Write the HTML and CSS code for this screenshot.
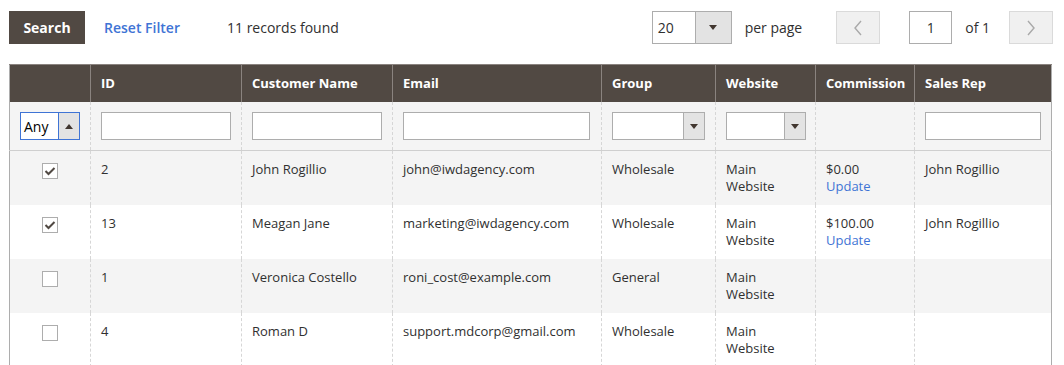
FILE: index.html
```html
<!DOCTYPE html>
<html lang="en">
<head>
    <meta charset="UTF-8">
    <title>Sales Reps Grid</title>
    <link rel="stylesheet" href="styles.css">
</head>
<body>
    <div class="grid-wrap">
        <div class="toolbar">
            <div class="toolbar-left">
                <button class="btn-search">Search</button>
                <a class="reset-link" href="#">Reset Filter</a>
                <span class="records">11 records found</span>
            </div>
            <div class="pager">
                <div class="select-box per-page">
                    <span class="select-value">20</span>
                    <span class="select-arrow"><span class="tri-down"></span></span>
                </div>
                <span class="pager-label">per page</span>
                <button class="pager-btn btn-prev">
                    <svg width="10" height="16" viewBox="0 0 10 16"><path d="M8 1 L2 8 L8 15" fill="none" stroke="#a9a9a9" stroke-width="1.4"/></svg>
                </button>
                <div class="page-input">1</div>
                <span class="pager-label">of 1</span>
                <button class="pager-btn btn-next">
                    <svg width="10" height="16" viewBox="0 0 10 16"><path d="M2 1 L8 8 L2 15" fill="none" stroke="#a9a9a9" stroke-width="1.4"/></svg>
                </button>
            </div>
        </div>

        <table class="data-grid">
            <colgroup>
                <col style="width:81px">
                <col style="width:151px">
                <col style="width:151px">
                <col style="width:209px">
                <col style="width:114px">
                <col style="width:100px">
                <col style="width:99px">
                <col style="width:137px">
            </colgroup>
            <thead>
                <tr class="head-row">
                    <th></th>
                    <th>ID</th>
                    <th>Customer Name</th>
                    <th>Email</th>
                    <th>Group</th>
                    <th>Website</th>
                    <th>Commission</th>
                    <th>Sales Rep</th>
                </tr>
                <tr class="filter-row">
                    <td class="center">
                        <div class="select-box any-select">
                            <span class="select-value">Any</span>
                            <span class="select-arrow"><span class="tri-up"></span></span>
                        </div>
                    </td>
                    <td><div class="text-input w130"></div></td>
                    <td><div class="text-input w130"></div></td>
                    <td><div class="text-input w187"></div></td>
                    <td>
                        <div class="select-box filter-select w93">
                            <span class="select-value"></span>
                            <span class="select-arrow"><span class="tri-down"></span></span>
                        </div>
                    </td>
                    <td>
                        <div class="select-box filter-select w80">
                            <span class="select-value"></span>
                            <span class="select-arrow"><span class="tri-down"></span></span>
                        </div>
                    </td>
                    <td></td>
                    <td><div class="text-input w116"></div></td>
                </tr>
            </thead>
            <tbody>
                <tr class="alt">
                    <td class="center"><span class="checkbox checked"><svg width="12" height="10" viewBox="0 0 12 10"><path d="M1.5 5 L4.5 8 L10.5 2" fill="none" stroke="#514943" stroke-width="2"/></svg></span></td>
                    <td>2</td>
                    <td>John Rogillio</td>
                    <td>john@iwdagency.com</td>
                    <td>Wholesale</td>
                    <td>Main<br>Website</td>
                    <td>$0.00<br><a class="link" href="#">Update</a></td>
                    <td>John Rogillio</td>
                </tr>
                <tr>
                    <td class="center"><span class="checkbox checked"><svg width="12" height="10" viewBox="0 0 12 10"><path d="M1.5 5 L4.5 8 L10.5 2" fill="none" stroke="#514943" stroke-width="2"/></svg></span></td>
                    <td>13</td>
                    <td>Meagan Jane</td>
                    <td>marketing@iwdagency.com</td>
                    <td>Wholesale</td>
                    <td>Main<br>Website</td>
                    <td>$100.00<br><a class="link" href="#">Update</a></td>
                    <td>John Rogillio</td>
                </tr>
                <tr class="alt">
                    <td class="center"><span class="checkbox"></span></td>
                    <td>1</td>
                    <td>Veronica Costello</td>
                    <td>roni_cost@example.com</td>
                    <td>General</td>
                    <td>Main<br>Website</td>
                    <td></td>
                    <td></td>
                </tr>
                <tr>
                    <td class="center"><span class="checkbox"></span></td>
                    <td>4</td>
                    <td>Roman D</td>
                    <td>support.mdcorp@gmail.com</td>
                    <td>Wholesale</td>
                    <td>Main<br>Website</td>
                    <td></td>
                    <td></td>
                </tr>
            </tbody>
        </table>
    </div>
</body>
</html>
```

FILE: styles.css
```css
body {
    margin: 0;
    font-family: 'Open Sans', Arial, sans-serif;
    color: #303030;
    background-color: #ffffff;
}

.grid-wrap {
    padding: 11px 11px 0 9px;
}

/* Toolbar */
.toolbar {
    display: flex;
    justify-content: space-between;
    align-items: center;
    height: 33px;
    margin-bottom: 20px;
}

.toolbar-left {
    display: flex;
    align-items: center;
}

.btn-search {
    width: 76px;
    height: 33px;
    border: none;
    background-color: #514943;
    color: #ffffff;
    font-family: 'Open Sans', Arial, sans-serif;
    font-size: 14px;
    font-weight: bold;
    padding: 0;
}

.reset-link {
    margin-left: 19px;
    color: #3f74d5;
    font-size: 14px;
    font-weight: 600;
    text-decoration: none;
}

.records {
    margin-left: 47px;
    font-size: 14px;
}

.pager {
    display: flex;
    align-items: center;
}

.pager-label {
    font-size: 14px;
}

.pager-btn {
    display: flex;
    align-items: center;
    justify-content: center;
    width: 44px;
    height: 33px;
    padding: 0;
    background-color: #f0f0f0;
    border: 1px solid #dadada;
}

.btn-prev {
    margin-left: 34px;
}

.btn-next {
    margin-left: 19px;
}

.per-page {
    width: 80px;
    height: 33px;
    margin-right: 13px;
}

.per-page .select-arrow {
    width: 35px;
}

.per-page .select-value {
    padding-left: 5px;
    font-size: 14px;
}

.page-input {
    width: 43px;
    height: 33px;
    box-sizing: border-box;
    margin-left: 29px;
    margin-right: 13px;
    border: 1px solid #adadad;
    font-size: 14px;
    text-align: center;
    line-height: 31px;
}

/* Select boxes */
.select-box {
    display: flex;
    box-sizing: border-box;
    border: 1px solid #adadad;
    background-color: #ffffff;
}

.select-value {
    flex: 1;
    display: flex;
    align-items: center;
    font-size: 13px;
}

.select-arrow {
    width: 20px;
    display: flex;
    align-items: center;
    justify-content: center;
    background-color: #e3e3e3;
    border-left: 1px solid #adadad;
}

.tri-down {
    width: 0;
    height: 0;
    border-left: 4px solid transparent;
    border-right: 4px solid transparent;
    border-top: 5px solid #41362f;
}

.tri-up {
    width: 0;
    height: 0;
    border-left: 4px solid transparent;
    border-right: 4px solid transparent;
    border-bottom: 5px solid #41362f;
}

.any-select {
    width: 60px;
    height: 28px;
    margin: 0 auto;
    border-color: #3f74d5;
}

.any-select .select-arrow {
    border-left-color: #3f74d5;
}

.any-select .select-value {
    padding-left: 3px;
    font-size: 14px;
    color: #000000;
}

.filter-select {
    height: 28px;
}

/* Table */
.data-grid {
    width: 1042px;
    table-layout: fixed;
    border-collapse: collapse;
    border: 1px solid #adadad;
    font-size: 13px;
}

.data-grid th {
    height: 36px;
    padding: 0 10px 1px;
    background-color: #514943;
    color: #ffffff;
    font-weight: bold;
    text-align: left;
    border-left: 1px solid #8a837f;
    border-top: 1px solid #8a837f;
}

.data-grid th:first-child {
    border-left: 1px solid #adadad;
}

.filter-row td {
    height: 48px;
    padding: 0 10px;
    background-color: #f4f4f4;
    border-left: 1px dashed #d6d6d6;
    border-bottom: 1px solid #cfcfcf;
    vertical-align: middle;
}

.text-input {
    height: 28px;
    box-sizing: border-box;
    border: 1px solid #adadad;
    background-color: #ffffff;
}

.w130 { width: 130px; }
.w187 { width: 187px; }
.w93 { width: 93px; }
.w80 { width: 80px; }
.w116 { width: 116px; }

tbody td {
    height: 34px;
    padding: 10px 10px 10px;
    vertical-align: top;
    line-height: 17px;
    border-left: 1px dashed #d6d6d6;
}

.data-grid td:first-child {
    border-left: 1px solid #adadad;
}

tbody tr.alt td {
    background-color: #f4f4f4;
}

.center {
    text-align: center;
}

.checkbox {
    display: inline-flex;
    align-items: center;
    justify-content: center;
    width: 16px;
    height: 16px;
    box-sizing: border-box;
    margin-top: 2px;
    border: 1px solid #adadad;
    background-color: #ffffff;
    vertical-align: top;
}

.link {
    color: #3f74d5;
    text-decoration: none;
}
```
